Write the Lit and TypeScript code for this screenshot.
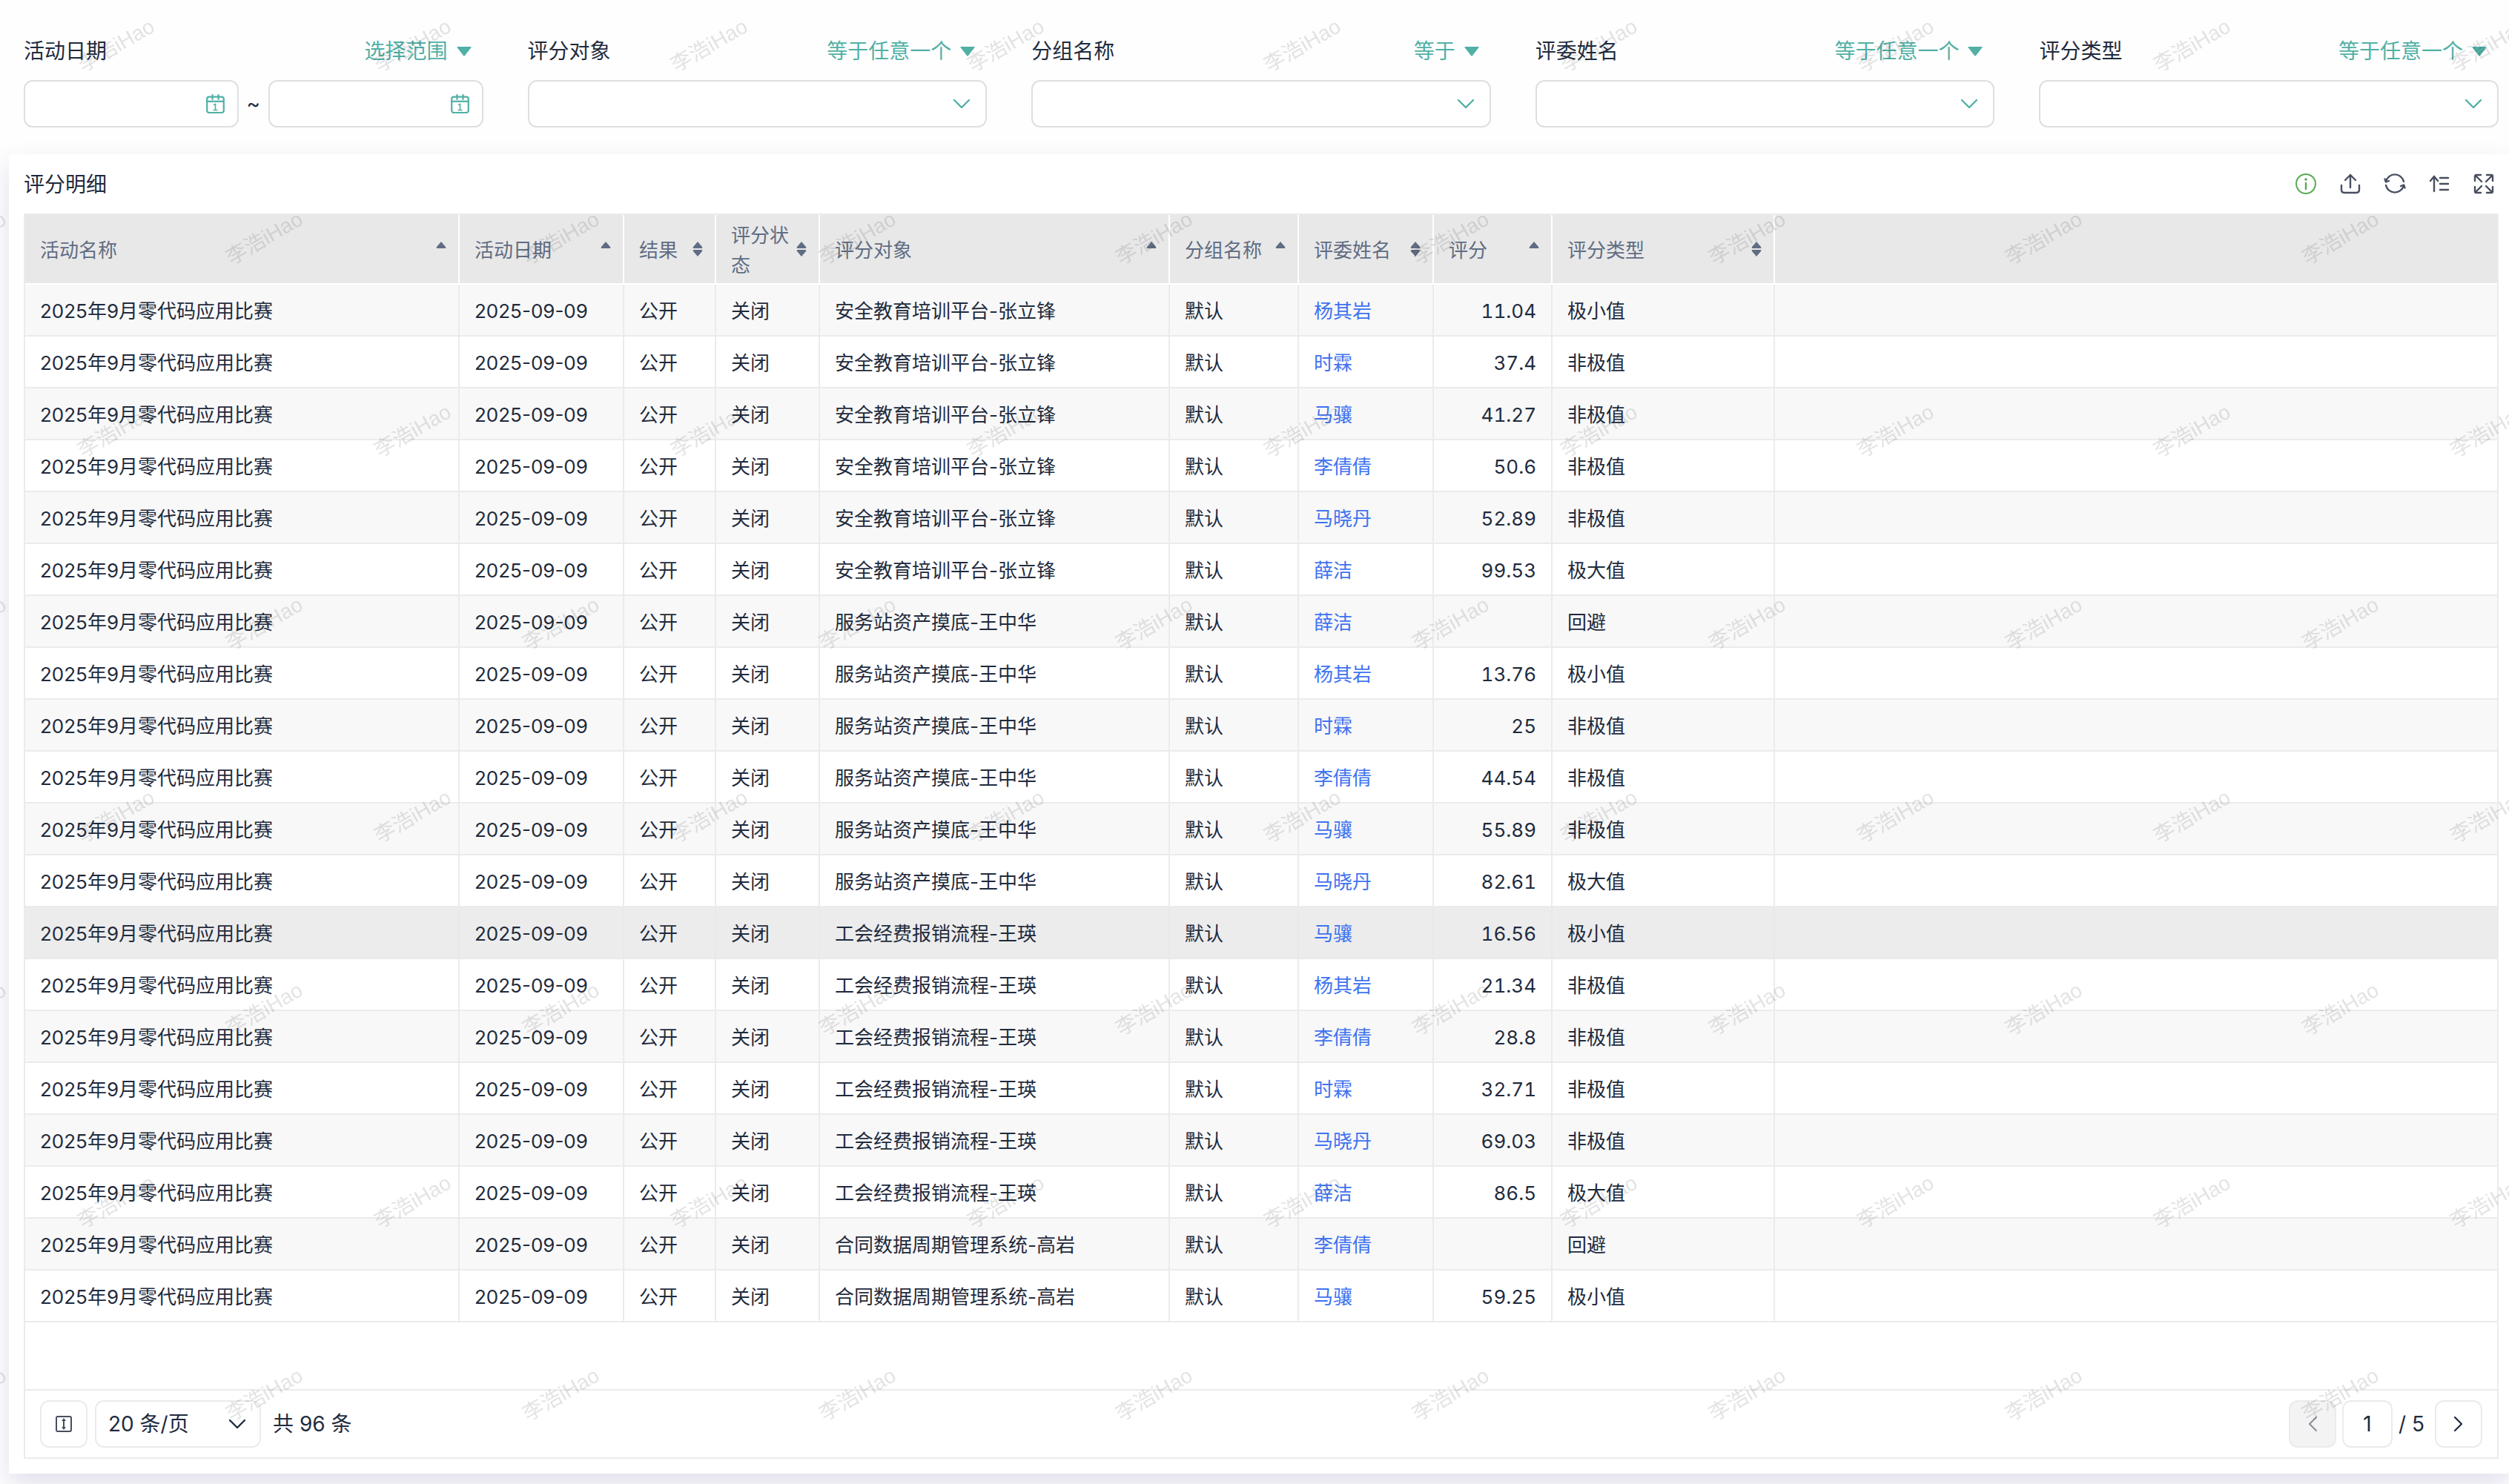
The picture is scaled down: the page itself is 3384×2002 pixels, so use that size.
import { LitElement, html, css, svg, nothing } from "lit";
import { customElement } from "lit/decorators.js";
import { classMap } from "lit/directives/class-map.js";

type Sort = "up" | "both";

interface Column {
  title: string;
  key: string;
  sort: Sort;
}

const columns: Column[] = [
  { title: "活动名称", key: "name", sort: "up" },
  { title: "活动日期", key: "date", sort: "up" },
  { title: "结果", key: "result", sort: "both" },
  { title: "评分状态", key: "state", sort: "both" },
  { title: "评分对象", key: "target", sort: "up" },
  { title: "分组名称", key: "group", sort: "up" },
  { title: "评委姓名", key: "judge", sort: "both" },
  { title: "评分", key: "score", sort: "up" },
  { title: "评分类型", key: "kind", sort: "both" },
];

const safety = "安全教育培训平台-张立锋";
const station = "服务站资产摸底-王中华";
const union = "工会经费报销流程-王瑛";
const contract = "合同数据周期管理系统-高岩";

// target, judge, score, kind
const rows: [string, string, string, string][] = [
  [safety, "杨其岩", "11.04", "极小值"],
  [safety, "时霖", "37.4", "非极值"],
  [safety, "马骧", "41.27", "非极值"],
  [safety, "李倩倩", "50.6", "非极值"],
  [safety, "马晓丹", "52.89", "非极值"],
  [safety, "薛洁", "99.53", "极大值"],
  [station, "薛洁", "", "回避"],
  [station, "杨其岩", "13.76", "极小值"],
  [station, "时霖", "25", "非极值"],
  [station, "李倩倩", "44.54", "非极值"],
  [station, "马骧", "55.89", "非极值"],
  [station, "马晓丹", "82.61", "极大值"],
  [union, "马骧", "16.56", "极小值"],
  [union, "杨其岩", "21.34", "非极值"],
  [union, "李倩倩", "28.8", "非极值"],
  [union, "时霖", "32.71", "非极值"],
  [union, "马晓丹", "69.03", "非极值"],
  [union, "薛洁", "86.5", "极大值"],
  [contract, "李倩倩", "", "回避"],
  [contract, "马骧", "59.25", "极小值"],
];

const highlighted = 12;

const filters = [
  { label: "活动日期", op: "选择范围", range: true },
  { label: "评分对象", op: "等于任意一个", range: false },
  { label: "分组名称", op: "等于", range: false },
  { label: "评委姓名", op: "等于任意一个", range: false },
  { label: "评分类型", op: "等于任意一个", range: false },
];

const shared = css`
  :host,
  * {
    box-sizing: border-box;
  }
  button,
  input,
  select {
    font: inherit;
    color: inherit;
    margin: 0;
    padding: 0;
    border: 0;
    background: none;
    appearance: none;
    outline: none;
  }
  svg {
    display: block;
    flex: none;
  }
`;

const chevron = svg`<path d="M2 3 L12 13 L22 3" fill="none" stroke="currentColor" stroke-width="2.4" stroke-linecap="round" stroke-linejoin="round"/>`;

@customElement("filter-field")
class FilterField extends LitElement {
  static properties = {
    label: { type: String },
    op: { type: String },
    range: { type: Boolean },
  };
  declare label: string;
  declare op: string;
  declare range: boolean;

  static styles = [
    shared,
    css`
      :host {
        display: block;
        min-width: 0;
      }
      .head {
        display: flex;
        justify-content: space-between;
        align-items: center;
        height: 42px;
        margin-bottom: 18px;
        padding-right: 16px;
      }
      .op {
        display: flex;
        align-items: center;
        gap: 12px;
        color: #51b0a5;
        line-height: 40px;
      }
      .body {
        display: flex;
        align-items: center;
      }
      .box {
        flex: 1;
        min-width: 0;
        height: 64px;
        display: flex;
        align-items: center;
        border: 2px solid #dfdfdf;
        border-radius: 12px;
        background: #fff;
        padding-right: 20px;
        color: #51b0a5;
      }
      .day {
        padding-right: 16px;
      }
      .box input,
      .box select {
        flex: 1;
        min-width: 0;
        height: 100%;
        padding-left: 20px;
        color: #1f2b3d;
      }
      .tilde {
        width: 40px;
        text-align: center;
      }
    `,
  ];

  private dateBox(id: string, name: string) {
    return html`<div class="box day">
      <input id=${id} type="text" aria-label=${name} />
      <svg width="26" height="28" viewBox="0 -1 26 28">
        <g fill="none" stroke="currentColor" stroke-width="2.2">
          <rect x="1.2" y="3.6" width="22.6" height="21.4" rx="3" />
          <path d="M1.2 9.800 H23.8" />
          <path d="M8.500 1 V7 M16.500 1 V7" stroke-linecap="round" />
        </g>
        <path d="M10 14.5 L12.500 13.5 V21 M9.5 21.5 H15.5" fill="none" stroke="currentColor" stroke-width="1.6" />
      </svg>
    </div>`;
  }

  render() {
    return html`
      <div class="head">
        <label for="field">${this.label}</label>
        <button class="op" type="button">
          ${this.op}
          <svg width="20" height="14" viewBox="0 0 20 14"><path d="M1 1 H19 Q20 1 19.5 2 L11 13 Q10 14 9 13 L.5 2 Q0 1 1 1Z" fill="currentColor" /></svg>
        </button>
      </div>
      ${this.range
        ? html`<div class="body">
            ${this.dateBox("field", "开始日期")}<span class="tilde">~</span>${this.dateBox("end", "结束日期")}
          </div>`
        : html`<div class="body">
            <div class="box">
              <select id="field"></select>
              <svg width="24" height="16" viewBox="0 0 24 16">${chevron}</svg>
            </div>
          </div>`}
    `;
  }
}

@customElement("score-table")
class ScoreTable extends LitElement {
  static styles = [
    shared,
    css`
      :host {
        display: block;
      }
      table {
        width: 100%;
        table-layout: fixed;
        border-collapse: separate;
        border-spacing: 0;
        font-size: 26px;
      }
      .name { width: 586px; }
      .date { width: 222px; }
      .result { width: 124px; }
      .state { width: 140px; }
      .target { width: 472px; }
      .group { width: 174px; }
      .judge { width: 182px; }
      .score { width: 160px; }
      .kind { width: 300px; }
      th {
        height: 94px;
        padding: 4px 16px 4px 20px;
        background: #e8e8e8;
        border-right: 2px solid #fff;
        border-bottom: 2px solid #fff;
        color: #606c83;
        font-weight: 400;
        text-align: left;
      }
      th:last-child,
      td:last-child {
        border-right: 0;
      }
      .cell {
        display: flex;
        align-items: center;
        justify-content: space-between;
        line-height: 40px;
      }
      .cell span {
        padding-top: 4px;
      }
      td {
        height: 70px;
        padding: 4px 20px 0;
        line-height: 40px;
        white-space: nowrap;
        border-right: 2px solid #ebebeb;
        border-bottom: 2px solid #ebebeb;
      }
      tr.odd td {
        background: #f8f8f8;
      }
      tr.active td {
        background: #ececec;
        border-color: #e9e9e9;
      }
      .num {
        text-align: right;
        font-variant-numeric: tabular-nums;
      }
      a {
        color: #3f73f0;
        text-decoration: none;
      }
    `,
  ];

  render() {
    return html`<table>
      <colgroup>
        ${columns.map((c) => html`<col class=${c.key} />`)}
        <col />
      </colgroup>
      <thead>
        <tr>
          ${columns.map(
            (c) => html`<th scope="col">
              <div class="cell">
                <span>${c.title}</span>
                <svg width="14" height="22" viewBox="0 0 14 22">
                  <path d="M7 1 L13 8 Q14 10 12 10 H2 Q0 10 1 8Z" fill="currentColor" />
                  ${c.sort === "both"
                    ? svg`<path d="M7 21 L13 14 Q14 12 12 12 H2 Q0 12 1 14Z" fill="currentColor" />`
                    : nothing}
                </svg>
              </div>
            </th>`
          )}
          <th></th>
        </tr>
      </thead>
      <tbody>
        ${rows.map(
          ([target, judge, score, kind], i) => html`<tr
            class=${classMap({ odd: i % 2 === 0, active: i === highlighted })}
          >
            <td>2025年9月零代码应用比赛</td>
            <td>2025-09-09</td>
            <td>公开</td>
            <td>关闭</td>
            <td>${target}</td>
            <td>默认</td>
            <td><a href="#">${judge}</a></td>
            <td class="num">${score}</td>
            <td>${kind}</td>
            <td></td>
          </tr>`
        )}
      </tbody>
    </table>`;
  }
}

@customElement("app-root")
class AppRoot extends LitElement {
  static styles = [
    shared,
    css`
      :host {
        display: flex;
        flex-direction: column;
        position: relative;
        min-height: 100vh;
        padding-bottom: 14px;
        overflow: hidden;
        background: #fefefe;
        color: #1f2b3d;
        font-family: Inter, "Noto Sans CJK SC", sans-serif;
        font-size: 28px;
        line-height: 40px;
      }
      .filters {
        display: grid;
        grid-template-columns: repeat(5, minmax(0, 1fr));
        gap: 60px;
        padding: 48px 14px 36px 32px;
      }
      .card {
        flex: 1;
        display: flex;
        flex-direction: column;
        margin-left: 12px;
        padding: 0 14px 20px 20px;
        background: #fff;
        box-shadow: 0 14px 32px rgba(60, 40, 120, 0.15);
      }
      .title {
        display: flex;
        align-items: center;
        justify-content: space-between;
        height: 80px;
      }
      h2 {
        margin: 0;
        padding-top: 2px;
        font-size: 28px;
        font-weight: 400;
      }
      .tools {
        display: flex;
        gap: 28px;
        padding-right: 4px;
        color: #474f5f;
      }
      .info {
        color: #57ac50;
      }
      .grid {
        flex: 1;
        display: flex;
        flex-direction: column;
        border: 2px solid #ebebeb;
      }
      .footer {
        display: flex;
        align-items: center;
        justify-content: space-between;
        height: 92px;
        margin-top: auto;
        padding: 0 20px;
        border-top: 2px solid #ebebeb;
      }
      .group {
        display: flex;
        align-items: center;
      }
      .box {
        display: flex;
        align-items: center;
        justify-content: center;
        height: 64px;
        width: 64px;
        border: 2px solid #ebebeb;
        border-radius: 12px;
        background: #fff;
      }
      .height {
        color: #474f5f;
      }
      .size {
        width: 224px;
        margin: 0 16px 0 10px;
        padding: 0 18px 0 16px;
      }
      .size select {
        flex: 1;
        min-width: 0;
        height: 60px;
      }
      .prev {
        background: #f3f3f3;
        color: #8d929c;
      }
      .page {
        width: 68px;
        margin: 0 8px;
        text-align: center;
      }
      .next {
        margin-left: 14px;
      }
      .watermark {
        position: absolute;
        inset: 0;
        width: 100%;
        height: 100%;
        pointer-events: none;
      }
      .mark {
        font-family: "Liberation Sans", "Noto Sans CJK SC", sans-serif;
        font-size: 28px;
        fill: #000;
        fill-opacity: 0.11;
      }
    `,
  ];

  render() {
    return html`
      <div class="filters">
        ${filters.map(
          (f) => html`<filter-field .label=${f.label} .op=${f.op} .range=${f.range}></filter-field>`
        )}
      </div>
      <section class="card">
        <div class="title">
          <h2>评分明细</h2>
          <div class="tools">
            <button class="info" type="button" aria-label="说明">
              <svg width="32" height="32" viewBox="0 0 32 32" fill="none" stroke="currentColor" stroke-width="2">
                <circle cx="16" cy="16" r="13" />
                <path d="M16 15 V23" stroke-width="2.4" stroke-linecap="round" />
                <circle cx="16" cy="10" r="1.8" fill="currentColor" stroke="none" />
              </svg>
            </button>
            <button type="button" aria-label="导出">
              <svg width="32" height="32" viewBox="0 0 32 32" fill="none" stroke="currentColor" stroke-width="2.4" stroke-linecap="round" stroke-linejoin="round">
                <path d="M4 18 V24 Q4 28 8 28 H24 Q28 28 28 24 V18" />
                <path d="M16 21 V4 M9 11 L16 4 L23 11" />
              </svg>
            </button>
            <button type="button" aria-label="刷新">
              <svg width="32" height="32" viewBox="0 0 32 32" fill="none" stroke="currentColor" stroke-width="2.4" stroke-linecap="round" stroke-linejoin="round">
                <path d="M4 13 A12.3 12.3 0 0 1 28 13" />
                <path d="M28 18 A12.3 12.3 0 0 1 4 18" />
                <path d="M2.5 9.5 L4 13.5 L8 12" />
                <path d="M29.5 21.5 L28 17.5 L24 19" />
              </svg>
            </button>
            <button type="button" aria-label="排序">
              <svg width="32" height="32" viewBox="0 0 32 32" fill="none" stroke="currentColor" stroke-width="2.4" stroke-linecap="round" stroke-linejoin="round">
                <path d="M9 26 V6 M4 12 L9 6 L14 12" />
                <path d="M17 8 H28 M17 16 H28 M17 24 H28" />
              </svg>
            </button>
            <button type="button" aria-label="全屏">
              <svg width="32" height="32" viewBox="0 0 32 32" fill="none" stroke="currentColor" stroke-width="2.4" stroke-linecap="round" stroke-linejoin="round">
                <path d="M4 12 V6 Q4 4 6 4 H12 M5 5 L13 13" />
                <path d="M20 4 H26 Q28 4 28 6 V12 M27 5 L19 13" />
                <path d="M4 20 V26 Q4 28 6 28 H12 M5 27 L13 19" />
                <path d="M20 28 H26 Q28 28 28 26 V20 M27 27 L19 19" />
              </svg>
            </button>
          </div>
        </div>
        <div class="grid">
          <score-table></score-table>
          <div class="footer">
            <div class="group">
              <button class="box height" type="button" aria-label="行高">
                <svg width="24" height="24" viewBox="0 0 24 24" fill="none" stroke="currentColor" stroke-width="2">
                  <rect x="2" y="2" width="20" height="20" rx="2" />
                  <path d="M12 6 V18" />
                  <path d="M12 4 L15 8 H9Z M12 20 L15 16 H9Z" fill="currentColor" stroke="none" />
                </svg>
              </button>
              <div class="box size">
                <select aria-label="每页条数">
                  <option>20 条/页</option>
                </select>
                <svg width="24" height="16" viewBox="0 0 24 16">${chevron}</svg>
              </div>
              <span>共 96 条</span>
            </div>
            <div class="group">
              <button class="box prev" type="button" disabled aria-label="上一页">
                <svg width="12" height="20" viewBox="0 0 12 20" fill="none" stroke="currentColor" stroke-width="2.2" stroke-linecap="round" stroke-linejoin="round"><path d="M11 1 L2 10 L11 19" /></svg>
              </button>
              <input class="box page" type="text" value="1" aria-label="页码" />
              <span>/ 5</span>
              <button class="box next" type="button" aria-label="下一页">
                <svg width="12" height="20" viewBox="0 0 12 20" fill="none" stroke="currentColor" stroke-width="2.2" stroke-linecap="round" stroke-linejoin="round"><path d="M1 1 L10 10 L1 19" /></svg>
              </button>
            </div>
          </div>
        </div>
      </section>
      <svg class="watermark" aria-hidden="true">
        <defs>
          <pattern id="mark" width="400" height="520" patternUnits="userSpaceOnUse" patternTransform="translate(20 0)">
            <text class="mark" transform="translate(92 98) rotate(-30)">李浩iHao</text>
            <text class="mark" transform="translate(292 358) rotate(-30)">李浩iHao</text>
          </pattern>
        </defs>
        <rect width="100%" height="100%" fill="url(#mark)" />
      </svg>
    `;
  }
}
